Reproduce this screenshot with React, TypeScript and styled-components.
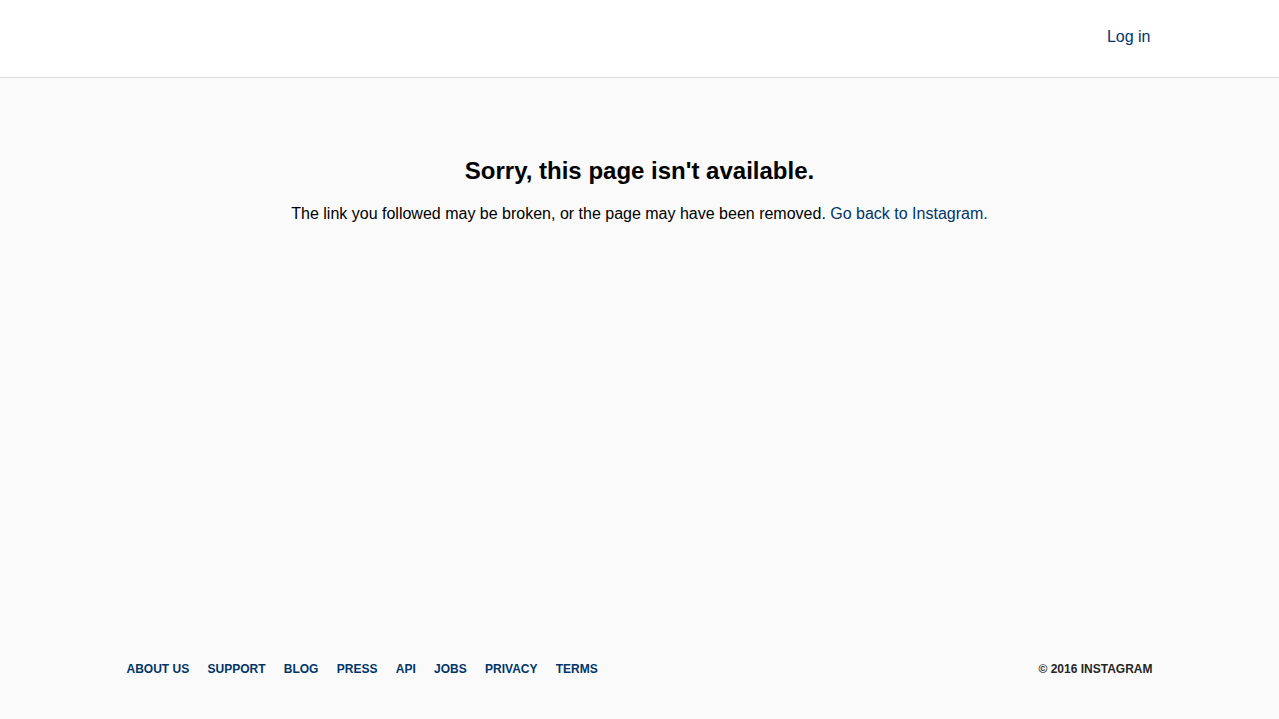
import React from "react";
import styled, { createGlobalStyle } from "styled-components";

const GlobalStyle = createGlobalStyle`
  html, body {
    margin: 0;
    padding: 0;
    background: #fafafa;
  }
  body {
    font-family: "Liberation Sans", Arial, sans-serif;
    color: #262626;
  }
  a {
    text-decoration: none;
    color: #003569;
  }
`;

const footerLinks = ["About us", "Support", "Blog", "Press", "API", "Jobs", "Privacy", "Terms"];

const App: React.FC = () => {
  return (
    <Page>
      <GlobalStyle />
      <Header>
        <HeaderInner>
          <LoginLink href="#">Log in</LoginLink>
        </HeaderInner>
      </Header>
      <Main>
        <Title>Sorry, this page isn't available.</Title>
        <Message>
          The link you followed may be broken, or the page may have been removed.{" "}
          <a href="#">Go back to Instagram.</a>
        </Message>
      </Main>
      <Footer>
        <FooterInner>
          <FooterNav>
            {footerLinks.map((item) => (
              <FooterLink key={item} href="#">
                {item}
              </FooterLink>
            ))}
          </FooterNav>
          <Copyright>© 2016 Instagram</Copyright>
        </FooterInner>
      </Footer>
    </Page>
  );
};

export default App;

const Page = styled.div`
  display: flex;
  flex-direction: column;
  min-height: 100vh;
`;

const Header = styled.header`
  background-color: #fff;
  border-bottom: 1px solid #dbdbdb;
  height: 77px;
`;

const HeaderInner = styled.div`
  max-width: 1026px;
  margin: 0 auto;
  height: 100%;
  display: flex;
  align-items: center;
  justify-content: flex-end;
  padding-right: 2px;
  box-sizing: border-box;
`;

const LoginLink = styled.a`
  font-size: 16px;
  line-height: 20px;
  margin-top: -3px;
`;

const Main = styled.main`
  flex: 1;
  text-align: center;
  padding-top: 79px;
`;

const Title = styled.h2`
  margin: 0;
  font-size: 24px;
  line-height: 28px;
  font-weight: 700;
  color: #000;
`;

const Message = styled.p`
  margin: 19px 0 0;
  font-size: 16px;
  line-height: 20px;
  color: #000;
`;

const Footer = styled.footer`
  padding: 0 0 42px;
`;

const FooterInner = styled.div`
  max-width: 1026px;
  margin: 0 auto;
  display: flex;
  align-items: center;
  justify-content: space-between;
`;

const FooterNav = styled.nav`
  display: flex;
  gap: 18.3px;
`;

const FooterLink = styled.a`
  font-size: 12px;
  line-height: 15px;
  font-weight: 700;
  text-transform: uppercase;
  color: #003569;
`;

const Copyright = styled.span`
  font-size: 12px;
  line-height: 15px;
  font-weight: 700;
  text-transform: uppercase;
  color: #262626;
`;
